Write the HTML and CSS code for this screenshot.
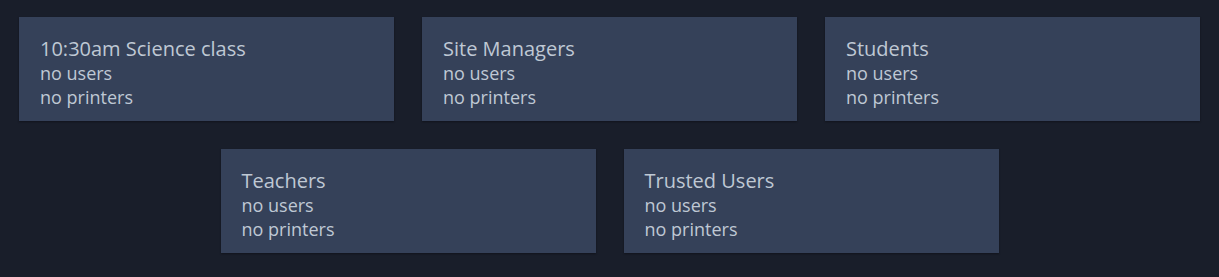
FILE: index.html
```html
<!DOCTYPE html>
<html>
<head>
<meta charset="utf-8">
<link rel="stylesheet" href="styles.css">
</head>
<body>
<div class="groups">
  <div class="card"><div class="title">10:30am Science class</div><div class="line">no users</div><div class="line">no printers</div></div>
  <div class="card"><div class="title">Site Managers</div><div class="line">no users</div><div class="line">no printers</div></div>
  <div class="card"><div class="title">Students</div><div class="line">no users</div><div class="line">no printers</div></div>
  <div class="card"><div class="title">Teachers</div><div class="line">no users</div><div class="line">no printers</div></div>
  <div class="card"><div class="title">Trusted Users</div><div class="line">no users</div><div class="line">no printers</div></div>
</div>
</body>
</html>
```
FILE: styles.css
```css
html, body {
  margin: 0;
  background: #191e2a;
  height: 100%;
}
body {
  font-family: "Open Sans", "DejaVu Sans", sans-serif;
  color: #bfc8d4;
}
.groups {
  display: flex;
  flex-wrap: wrap;
  justify-content: center;
  gap: 28px;
  padding-top: 17px;
}
.card {
  width: 375px;
  height: 104px;
  box-sizing: border-box;
  background: #354159;
  padding: 20px 20px 12px 21px;
  box-shadow: 0 1px 2px rgba(0,0,0,0.35);
}
.title {
  font-size: 20px;
  line-height: 24px;
}
.line {
  font-size: 18px;
  line-height: 24px;
}
```
